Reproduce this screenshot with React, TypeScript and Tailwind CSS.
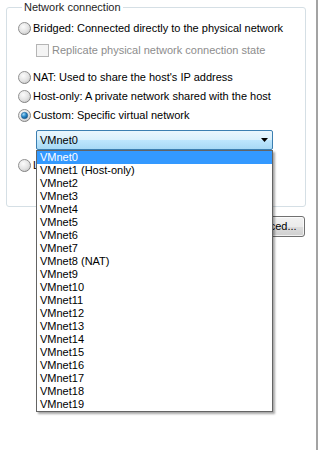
import { useId } from 'react';

const networks = [
  'VMnet0',
  'VMnet1 (Host-only)',
  'VMnet2',
  'VMnet3',
  'VMnet4',
  'VMnet5',
  'VMnet6',
  'VMnet7',
  'VMnet8 (NAT)',
  'VMnet9',
  'VMnet10',
  'VMnet11',
  'VMnet12',
  'VMnet13',
  'VMnet14',
  'VMnet15',
  'VMnet16',
  'VMnet17',
  'VMnet18',
  'VMnet19',
];

const Radio = ({ checked = false }: { checked?: boolean }) => {
  const id = useId().replace(/:/g, '');
  return (
    <svg width="13" height="13" viewBox="0 0 13 13" className="shrink-0">
      <defs>
        <linearGradient id={`ring${id}`} x1="0" y1="0" x2="1" y2="1">
          <stop offset="0" stopColor="#9a9a9a" />
          <stop offset="1" stopColor="#7a7a7a" />
        </linearGradient>
        <radialGradient id={`fill${id}`} cx="0.4" cy="0.35" r="0.7">
          <stop offset="0" stopColor="#fbfbfb" />
          <stop offset="0.6" stopColor="#e4e4e4" />
          <stop offset="1" stopColor="#c9c9c9" />
        </radialGradient>
        <radialGradient id={`dot${id}`} cx="0.35" cy="0.3" r="0.75">
          <stop offset="0" stopColor="#a9dcf7" />
          <stop offset="0.5" stopColor="#2b8ccc" />
          <stop offset="1" stopColor="#0f4f86" />
        </radialGradient>
      </defs>
      <circle cx="6.5" cy="6.5" r="6" fill={`url(#fill${id})`} stroke={`url(#ring${id})`} strokeWidth="1" />
      {checked && <circle cx="6.5" cy="6.5" r="3.2" fill={`url(#dot${id})`} stroke="#1d5f94" strokeWidth="0.6" />}
    </svg>
  );
};

const App = () => {
  return (
    <div className="w-[322px] h-[450px] bg-white text-[11px] text-black font-['Liberation_Sans',Arial,sans-serif]">
      <div className="w-[318px] h-full border-r-2 border-r-[#a3a3a3] pl-[6px]">
        <fieldset className="w-[300px] h-[207px] border border-[#d5dfe5] rounded-[3px] pl-[11px]">
          <legend className="ml-[4px] px-[2px] leading-[15px] text-[#1e1e1e]">Network connection</legend>

          <label className="mt-[4px] flex h-[19px] items-center gap-[2px]">
            <Radio />
            <span>Bridged: Connected directly to the physical network</span>
          </label>

          <label className="mt-[3px] ml-[18px] flex h-[19px] items-center gap-[3px] text-[#8d8d8d]">
            <span className="h-[13px] w-[13px] shrink-0 border border-[#b5b5b5] bg-[#f4f4f4]" />
            <span>Replicate physical network connection state</span>
          </label>

          <label className="mt-[8px] flex h-[19px] items-center gap-[2px]">
            <Radio />
            <span>NAT: Used to share the host's IP address</span>
          </label>

          <label className="flex h-[19px] items-center gap-[2px]">
            <Radio />
            <span>Host-only: A private network shared with the host</span>
          </label>

          <label className="flex h-[19px] items-center gap-[2px]">
            <Radio checked />
            <span>Custom: Specific virtual network</span>
          </label>

          {/* combo box with open list */}
          <div className="relative z-10 mt-[5px] ml-[18px] w-[237px]">
            <div className="flex h-[20px] items-center justify-between rounded-[2px] border border-[#3c7fb1] bg-[linear-gradient(to_bottom,#eaf6fd_0%,#d9f0fc_50%,#bee6fd_50%,#a7d9f5_100%)] pl-[3px] pr-[4px]">
              <span>VMnet0</span>
              <svg width="7" height="4" viewBox="0 0 7 4">
                <path d="M0 0h7L3.5 4z" fill="#000" />
              </svg>
            </div>
            <ul className="absolute left-0 top-full w-[237px] border border-[#646464] bg-white shadow-[2px_2px_2px_rgba(0,0,0,0.35)]">
              {networks.map((n, i) => (
                <li
                  key={n}
                  className={
                    i === 0
                      ? 'h-[13px] bg-[#3399ff] pl-[3px] leading-[13px] text-white'
                      : 'h-[13px] pl-[3px] leading-[13px]'
                  }
                >
                  {n}
                </li>
              ))}
            </ul>
          </div>

          <label className="mt-[6px] flex h-[19px] items-center gap-[2px]">
            <Radio />
            <span>LAN segment:</span>
          </label>
        </fieldset>

        <div className="mt-[9px] flex w-[300px] justify-end pr-[1px]">
          <button className="h-[21px] w-[75px] rounded-[3px] border border-[#707070] bg-[linear-gradient(to_bottom,#f2f2f2_0%,#ebebeb_50%,#dddddd_50%,#cfcfcf_100%)] text-center shadow-[inset_0_0_0_1px_rgba(255,255,255,0.7)]">
            Advanced...
          </button>
        </div>
      </div>
    </div>
  );
};

export default App;
